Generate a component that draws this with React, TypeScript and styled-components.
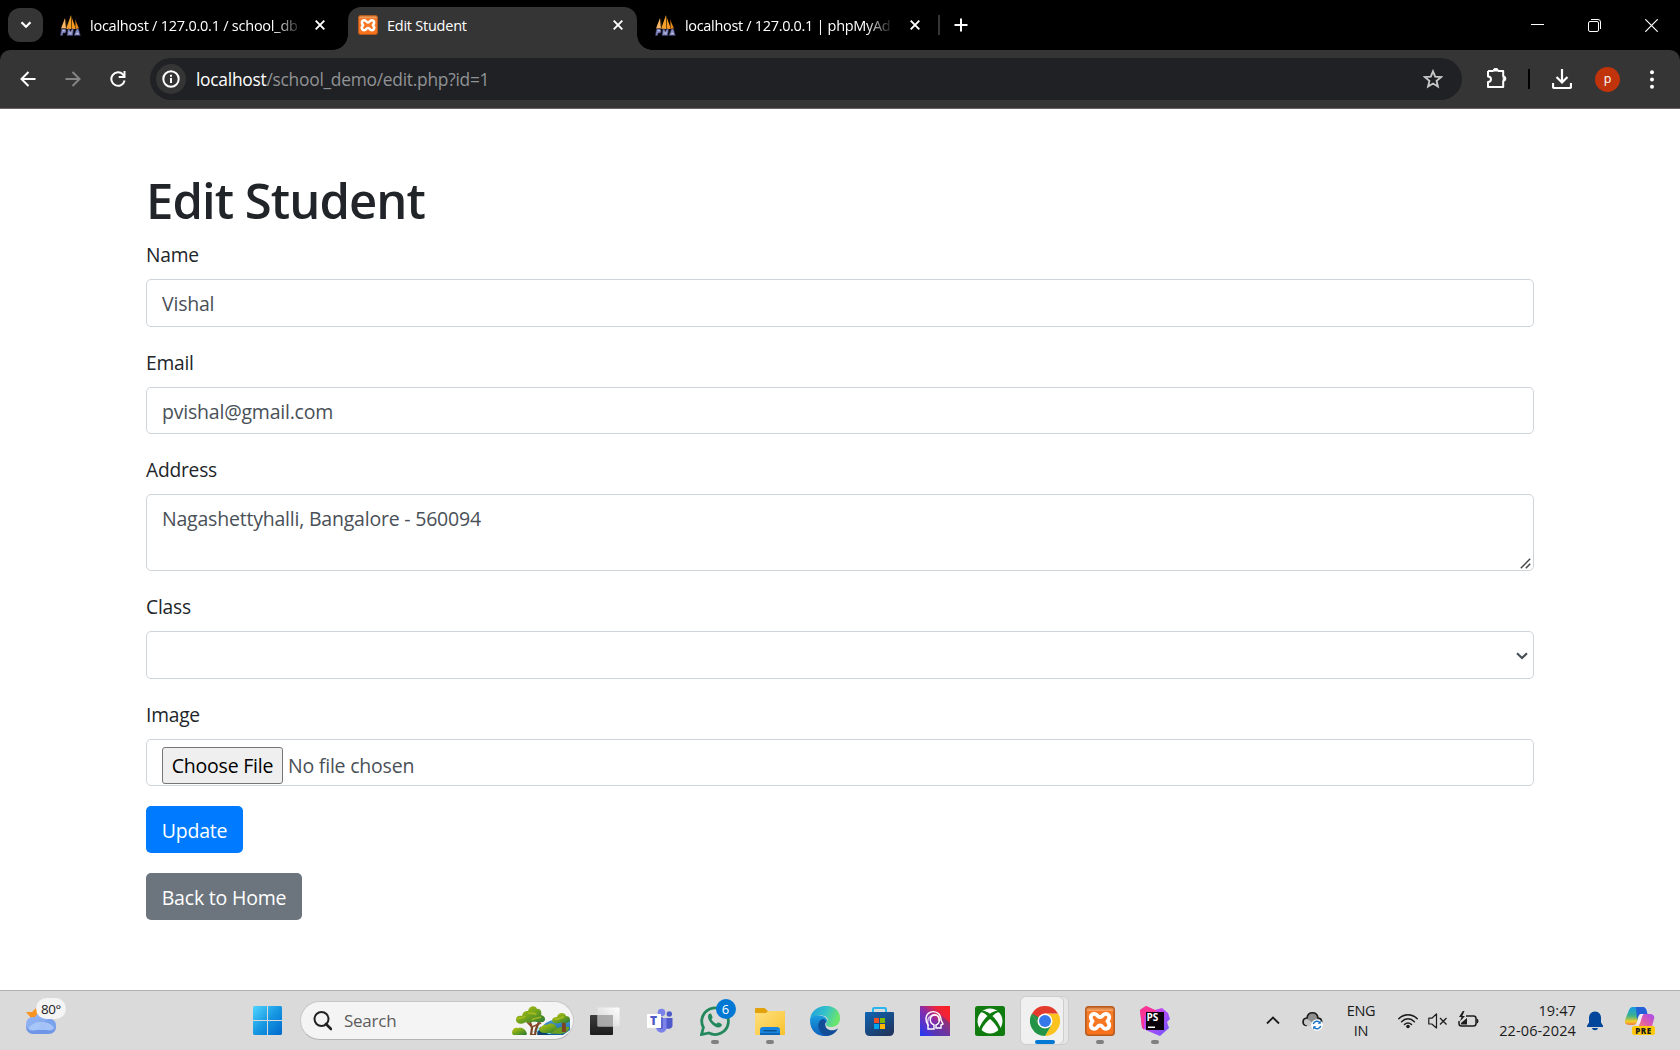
import React from "react";
import styled, { createGlobalStyle } from "styled-components";

const sans = `"Open Sans", "Noto Sans", sans-serif`;

const GlobalStyle = createGlobalStyle`
  *, *::before, *::after { box-sizing: border-box; }
  html, body { margin: 0; padding: 0; background: #fff; overflow: hidden; }
  body { font-family: ${sans}; }
  svg { display: block; flex: none; }
`;

const Screen = styled.div`
  width: 1680px;
  height: 1050px;
  display: flex;
  flex-direction: column;
  background: #fff;
`;

/* ---------- Browser frame ---------- */

const TabStrip = styled.div`
  height: 50px;
  background: #000;
  display: flex;
  align-items: center;
  padding-left: 8px;
`;

const TabSearch = styled.div`
  width: 35px;
  height: 34px;
  border-radius: 12px;
  background: #353535;
  display: grid;
  place-items: center;
`;

const Tab = styled.div<{ $width: number; $active?: boolean; $pad: number }>`
  width: ${(p) => p.$width}px;
  height: 50px;
  padding: 0 ${(p) => p.$pad}px 0 ${(p) => (p.$active ? 10 : 0)}px;
  display: flex;
  align-items: center;
  gap: 9px;
  position: relative;
  ${(p) =>
    p.$active &&
    `
    height: 43px;
    margin-top: 7px;
    padding-bottom: 7px;
    background: #353535;
    border-radius: 13px 13px 0 0;
    &::before, &::after {
      content: "";
      position: absolute;
      bottom: 0;
      width: 15px;
      height: 15px;
    }
    &::before { left: -15px; background: radial-gradient(circle at 0 0, transparent 14.5px, #353535 15px); }
    &::after { right: -15px; background: radial-gradient(circle at 100% 0, transparent 14.5px, #353535 15px); }
  `}
`;

const TabTitle = styled.span<{ $width: number; $after?: number; $tight?: boolean; $fade?: boolean }>`
  width: ${(p) => p.$width}px;
  margin-right: ${(p) => p.$after ?? 0}px;
  overflow: hidden;
  white-space: nowrap;
  color: #fff;
  font-size: 14.5px;
  line-height: 22px;
  padding-top: 1px;
  letter-spacing: ${(p) => (p.$tight ? -0.32 : -0.24)}px;
  ${(p) => p.$fade && "mask-image: linear-gradient(to right, #000 88%, rgba(0, 0, 0, 0.1) 100%);"}
`;

const Spacer = styled.div`
  flex: 1;
`;

const StripDivider = styled.div`
  width: 2px;
  height: 20px;
  margin: 0 14px 0 18px;
  background: #353535;
`;

const WindowControls = styled.div`
  display: flex;
  align-items: center;
  gap: 44px;
  padding-right: 22px;
`;

const ToolbarBack = styled.div`
  background: #000;
`;

const Toolbar = styled.div`
  height: 59px;
  background: #353535;
  border-bottom: 1px solid #6c6262;
  border-radius: 10px 10px 0 0;
  display: flex;
  align-items: center;
  padding: 0 20px 0 20px;
`;

const NavIcons = styled.div`
  display: flex;
  gap: 29px;
  width: 130px;
`;

const AddressBar = styled.div`
  width: 1312px;
  height: 42px;
  border-radius: 21px;
  background: #202124;
  display: flex;
  align-items: center;
  padding: 0 19px 0 6px;
`;

const InfoChip = styled.div`
  width: 30px;
  height: 30px;
  border-radius: 50%;
  background: #353535;
  display: grid;
  place-items: center;
  margin-right: 10px;
`;

const Url = styled.div`
  color: #909396;
  font-size: 17.4px;
  line-height: 26px;
  letter-spacing: -0.27px;
  flex: 1;
`;

const UrlHost = styled.span`
  color: #fff;
`;

const ToolbarActions = styled.div`
  flex: 1;
  display: flex;
  align-items: center;
`;

const ActionDivider = styled.div`
  width: 2px;
  height: 20px;
  background: #000;
  margin: 0 22px 0 20px;
`;

const Avatar = styled.div`
  width: 25px;
  height: 25px;
  border-radius: 50%;
  background: #c0330b;
  color: #fff;
  font-size: 12.5px;
  line-height: 23px;
  text-align: center;
  margin: 0 30px 0 23px;
`;

/* ---------- Page ---------- */

const Page = styled.main`
  flex: 1;
  padding: 61px 146px 0;
  color: #212529;
  font-size: 19.5px;
  line-height: 30px;
  letter-spacing: -0.21px;
`;

const Heading = styled.h1`
  margin: 0 0 10px;
  font-size: 49px;
  line-height: 60px;
  font-weight: 600;
  letter-spacing: -0.95px;
`;

const Group = styled.div<{ $height: number }>`
  height: ${(p) => p.$height}px;
`;

const Label = styled.label`
  display: block;
  height: 39px;
  font-size: 19.2px;
`;

const Control = styled.div<{ $height?: number }>`
  height: ${(p) => p.$height ?? 48}px;
  border: 1px solid #ced4da;
  border-radius: 5px;
  background: #fff;
  color: #495057;
  padding: 9px 15px 0;
  position: relative;
`;

const Grip = styled.svg`
  position: absolute;
  right: 2px;
  bottom: 1px;
`;

const SelectControl = styled(Control)`
  display: flex;
  align-items: center;
  justify-content: flex-end;
  padding: 2px 5px 0;
`;

const FileControl = styled(Control)`
  display: flex;
  gap: 5px;
  padding: 7px 15px 0;
  line-height: 37px;
`;

const FileButton = styled.span`
  width: 121px;
  height: 37px;
  border: 1px solid #767676;
  border-radius: 3px;
  background: #efefef;
  color: #000;
  text-align: center;
  line-height: 35px;
`;

const Button = styled.button<{ $width: number; $tone: string }>`
  display: block;
  width: ${(p) => p.$width}px;
  height: 47px;
  margin: 0 0 20px;
  padding: 3px 0 0;
  border: 0;
  border-radius: 5px;
  background: ${(p) => p.$tone};
  color: #fff;
  font: 19.5px/30px ${sans};
  letter-spacing: -0.2px;
`;

/* ---------- Taskbar ---------- */

const Taskbar = styled.footer`
  height: 60px;
  border-top: 1px solid #b0b0b0;
  background: #dadada;
  display: flex;
  align-items: center;
  color: #1b1b1b;
`;

const Weather = styled.div`
  width: 240px;
  height: 59px;
  padding: 15px 0 0 25px;
  position: relative;
`;

const WeatherBadge = styled.span`
  position: absolute;
  left: 36px;
  top: 7px;
  width: 30px;
  height: 21px;
  border-radius: 10.5px;
  background: #f4f4f4;
  font-size: 13.4px;
  line-height: 22px;
  letter-spacing: -0.4px;
  text-align: center;
`;

const Slot = styled.div`
  width: 55px;
  height: 59px;
  display: grid;
  place-items: center;
  position: relative;
`;

const ActiveSlot = styled(Slot)`
  &::before, &::after {
    content: "";
    position: absolute;
    top: 5px;
    height: 49px;
    border-radius: 6px;
    border: 1px solid #cdcdcd;
    background: #e6e6e6;
  }
  &::before { left: 12px; width: 40px; }
  &::after { left: 3px; width: 44px; background: #f0f0f0; }
  > * { z-index: 1; }
`;

const Indicator = styled.span<{ $active?: boolean }>`
  position: absolute;
  bottom: 6px;
  left: ${(p) => (p.$active ? 18 : 24)}px;
  width: ${(p) => (p.$active ? 20 : 8)}px;
  height: 4px;
  border-radius: 2px;
  background: ${(p) => (p.$active ? "#0078d4" : "#808080")};
`;

const Badge = styled.span`
  position: absolute;
  left: 28.5px;
  top: 8px;
  width: 20px;
  height: 20px;
  border-radius: 50%;
  background: #0078d4;
  color: #fff;
  font-size: 13px;
  line-height: 20px;
  text-align: center;
`;

const SearchBox = styled.div`
  width: 274px;
  height: 39px;
  margin: 0 3px 0 5px;
  border-radius: 20px;
  border: 1px solid #c8c8c8;
  border-bottom-color: #b4b4b4;
  background: #f4f4f4;
  display: flex;
  align-items: center;
  padding: 0 2px 0 12px;
`;

const SearchText = styled.span`
  flex: 1;
  padding-left: 12px;
  color: #5c5c5c;
  font-size: 17px;
  letter-spacing: -0.25px;
  line-height: 28px;
`;

const Tray = styled.div`
  display: flex;
  align-items: center;
  padding-right: 25px;
`;

const TrayText = styled.div<{ $width: number; $align: string; $tracking?: number }>`
  width: ${(p) => p.$width}px;
  text-align: ${(p) => p.$align};
  font-size: 14.5px;
  line-height: 20px;
  letter-spacing: ${(p) => p.$tracking ?? -0.3}px;
  white-space: nowrap;
`;

const Gap = styled.div<{ $w: number }>`
  width: ${(p) => p.$w}px;
`;

const Preview = styled.div`
  position: relative;
  width: 30px;
  height: 30px;
`;

const PreviewTag = styled.span`
  position: absolute;
  left: 7px;
  top: 20px;
  width: 23px;
  height: 9px;
  border-radius: 2px;
  background: #ffc90e;
  color: #1b1b1b;
  font-size: 8px;
  font-weight: 800;
  letter-spacing: 0.5px;
  line-height: 9px;
  text-align: center;
`;

const IconBox = styled.div`
  position: relative;
  width: 30px;
  height: 30px;
`;

const StormText = styled.span`
  position: absolute;
  left: 7px;
  top: 6px;
  color: #fff;
  font-size: 10px;
  font-weight: 700;
  line-height: 11px;
`;

/* ---------- Icons ---------- */

const PmaIcon = () => (
  <svg width="21" height="21" viewBox="0 0 21 21">
    <path d="M5 3 1 13.500h5z" fill="#f9b766" />
    <path d="M11 0 6 14h5.500z" fill="#f6a02c" />
    <path d="M11.700 2 13 6l3 8h-4.300z" fill="#fb9820" />
    <path d="m15 4.500 4 9-3.500.5z" fill="#e98a18" />
    <path d="M11.500 1v13M5.800 4l.9 10M15.500 5v9" stroke="#5c3a12" strokeWidth=".6" />
    <path d="M.5 20.500 1.500 14H5q1.500.5 1 2.500l-.5 1.500H3l-.4 2.500zM7 20.500 8 14h1.500l.8 2.500L12 14h1.500l-.8 6.500zM14 20.500l2.500-6.500h2l1.800 6.500z" fill="#8c90c4" stroke="#30335c" strokeWidth=".7" />
    <path d="M3 15.500h1.500M9.200 17.500l1 1 1.200-1M16.500 18.500h2" stroke="#dcdff2" strokeWidth=".8" fill="none" />
  </svg>
);

const XamppIcon = ({ size }: { size: number }) => (
  <svg width={size} height={size} viewBox="0 0 30 30">
    <defs>
      <linearGradient id="xg" x1="0" y1="0" x2="0" y2="1">
        <stop offset="0" stopColor="#c9753c" />
        <stop offset=".14" stopColor="#ffa461" />
        <stop offset=".15" stopColor="#f47b28" />
        <stop offset="1" stopColor="#f9711b" />
      </linearGradient>
    </defs>
    <rect x=".8" y=".8" width="28.400" height="28.400" rx="3" fill="url(#xg)" stroke="#b85a1c" strokeWidth="1.500" />
    <path
      d="M9.500 7.800C5.800 7.800 4.300 11.500 7.600 15.200 4.300 18.800 5.800 22.800 9.500 22.800c3.300 0 2.500-3.400 5.500-3.400s2.200 3.400 5.500 3.400c3.700 0 5.200-4 1.900-7.600C25.700 11.500 24.200 7.800 20.500 7.800c-3.300 0-2.500 3.400-5.500 3.400S12.800 7.800 9.500 7.800z"
      fill="none"
      stroke="#fff"
      strokeWidth="3.800"
      strokeLinejoin="round"
    />
  </svg>
);

const CloseIcon = () => (
  <svg width="10" height="10" viewBox="0 0 10 10">
    <path d="m.7.7 8.600 8.600M9.300.7.7 9.300" stroke="#fff" strokeWidth="1.900" />
  </svg>
);

const BackIcon = () => (
  <svg width="16" height="16" viewBox="0 0 16 16">
    <path d="M15.500 8H2M8.500 1 1.500 8l7 7" fill="none" stroke="#fff" strokeWidth="2" />
  </svg>
);

const ForwardIcon = () => (
  <svg width="16" height="16" viewBox="0 0 16 16">
    <path d="M.5 8H14M7.500 1l7 7-7 7" fill="none" stroke="#858585" strokeWidth="2" />
  </svg>
);

const ReloadIcon = () => (
  <svg width="16" height="16" viewBox="0 0 16 16">
    <path d="M14.600 9.500A6.700 6.700 0 1 1 13 3.500l1.300 1.600" fill="none" stroke="#fff" strokeWidth="2" />
    <path d="M15.500 0v7H8.700V5h4.800V0z" fill="#fff" />
  </svg>
);

const InfoIcon = () => (
  <svg width="18" height="18" viewBox="0 0 18 18">
    <circle cx="9" cy="9" r="7.700" fill="none" stroke="#fff" strokeWidth="2" />
    <path d="M9 8v5M9 4.700v2" stroke="#fff" strokeWidth="2" />
  </svg>
);

const StarIcon = () => (
  <svg width="20" height="20" viewBox="0 0 20 20">
    <path d="m10 2.300 2.200 5.300 5.800.5-4.400 3.800 1.300 5.600-4.900-3-4.900 3 1.300-5.600L2 8.100l5.800-.5z" fill="none" stroke="#c7c7c7" strokeWidth="1.900" />
  </svg>
);

const PuzzleIcon = () => (
  <svg width="22" height="22" viewBox="0 0 22 22">
    <path d="M2 3h5.500M12 3h5.200v5.700M17.200 12.500V19H2v-5c4-.2 4-5.400 0-5.600V3" fill="none" stroke="#fff" strokeWidth="2" strokeLinejoin="round" />
    <path d="M7 3a2.700 2.700 0 0 1 5.400 0zM17.200 7.900a2.700 2.700 0 0 1 0 5.400z" fill="#fff" stroke="#fff" />
  </svg>
);

const DownloadIcon = () => (
  <svg width="20" height="20" viewBox="0 0 20 20">
    <path d="M10 0v13M4.500 8l5.500 5.500L15.500 8M1 14v3.500q0 1.500 1.500 1.500h15q1.500 0 1.500-1.500V14" fill="none" stroke="#fff" strokeWidth="2.200" />
  </svg>
);

const KebabIcon = () => (
  <svg width="4" height="19" viewBox="0 0 4 19">
    <circle cx="2" cy="2.200" r="2" fill="#fff" />
    <circle cx="2" cy="9.500" r="2" fill="#fff" />
    <circle cx="2" cy="16.800" r="2" fill="#fff" />
  </svg>
);

const CloudSunIcon = () => (
  <svg width="32" height="30" viewBox="0 0 32 30">
    <defs>
      <linearGradient id="cl" x1="0" y1="0" x2="0" y2="1">
        <stop offset="0" stopColor="#9dbdf6" />
        <stop offset="1" stopColor="#6f98e8" />
      </linearGradient>
    </defs>
    <path d="M1 6h6l6-6v13l-7-1z" fill="#f79422" />
    <rect x="1" y="14" width="30" height="14" rx="7" fill="#6f96e6" />
    <circle cx="18" cy="15" r="9" fill="url(#cl)" />
    <circle cx="8" cy="18" r="7" fill="#8db0f2" />
    <circle cx="25" cy="19" r="6" fill="#7ba2ed" />
    <path d="M4 22c4-8 21-8 25 0-2 3-5 2-8 2H9c-3 0-5 0-5-2z" fill="#b3cdfb" opacity=".75" />
  </svg>
);

const WindowsIcon = () => (
  <svg width="29" height="29" viewBox="0 0 29 29">
    <defs>
      <linearGradient id="wn" x1="0" y1="0" x2="1" y2="1">
        <stop offset="0" stopColor="#4fd5ff" />
        <stop offset=".5" stopColor="#1797e2" />
        <stop offset="1" stopColor="#0069cc" />
      </linearGradient>
    </defs>
    <path d="M1 0h13v14H0V1zM15 0h13l1 1v13H15zM0 15h14v14H1l-1-1zM15 15h14v13l-1 1H15z" fill="url(#wn)" />
  </svg>
);

const SearchIcon = () => (
  <svg width="19" height="20" viewBox="0 0 19 20">
    <circle cx="8.500" cy="8" r="7" fill="none" stroke="#222" strokeWidth="2" />
    <path d="m13 13 5 5" stroke="#222" strokeWidth="2.600" strokeLinecap="round" />
  </svg>
);

const LandscapeIcon = () => (
  <svg width="59" height="29" viewBox="0 0 59 29">
    <defs>
      <linearGradient id="lf" x1="0" y1="0" x2="1" y2="1">
        <stop offset="0" stopColor="#c0c713" />
        <stop offset=".5" stopColor="#72a31c" />
        <stop offset="1" stopColor="#217537" />
      </linearGradient>
      <linearGradient id="lk" x1="0" y1="0" x2="0" y2="1">
        <stop offset="0" stopColor="#4596d4" />
        <stop offset="1" stopColor="#105d9d" />
      </linearGradient>
    </defs>
    <path d="M25 29c4-8 8-14 17-15h16v10l-7 5z" fill="url(#lk)" />
    <path d="M22 26c5-3 10 2 17 1M24 23c4-2 7 1 12 1" stroke="#74d5ef" strokeWidth="1.800" fill="none" />
    <path d="M26 29c-3-4 4-5 2-9 4 5 4 6 10 9z" fill="#0e426d" />
    <path d="M0 27c0-4 3-6 6-5 5-1 8 2 9 6l-1 1H1z" fill="url(#lf)" />
    <path d="M27 22c3 0 3-4 8-3 4-3 9-1 10 3l3 1-3 4H33c-3 0-6-1-6-5z" fill="url(#lf)" />
    <path d="M42 25c3-4 8-5 15-4 1 3-3 6-8 7l-11-.5z" fill="#6a9f23" />
    <path d="M51 16v9h2l-.5-9M18 16l2 6-1 7h4l1-6 3-7" fill="none" stroke="#7b4524" strokeWidth="2.200" />
    <path d="m15 16 5 5 9-4" fill="none" stroke="#8a4a28" strokeWidth="1.600" />
    <path d="M4 14c0-4 3-5 6-4 1-5 4-5 6-5 1-6 8-6 9-2 4-1 5 4 4 6 5 1 5 6 2 7-4 1-8-1-11 0-4 2-6-1-8 1-3 2-8 0-8-3z" fill="url(#lf)" />
    <path d="M40 14c1-3 4-3 5-3 1-5 8-5 9-1 4 0 5 4 3 6-4 2-6 0-9 1-4 1-8 0-8-3z" fill="url(#lf)" />
    <path d="M5 13c4-2 7 0 8-3M16 7c4 1 7-1 8 2M20 14c3-3 6-1 9-3M43 13c4 1 6-2 9-2" stroke="#b7c321" strokeWidth="1.800" fill="none" opacity=".7" />
  </svg>
);

const TaskViewIcon = () => (
  <svg width="30" height="30" viewBox="0 0 30 30">
    <defs>
      <linearGradient id="tv" x1="0" y1="0" x2="0" y2="1">
        <stop offset="0" stopColor="#3c3c3c" />
        <stop offset="1" stopColor="#1c1c1c" />
      </linearGradient>
      <linearGradient id="tw" x1="1" y1="0" x2="0" y2="1">
        <stop offset="0" stopColor="#fff" />
        <stop offset="1" stopColor="#d0d0d0" />
      </linearGradient>
    </defs>
    <rect x="0" y="9" width="23" height="20" rx="1" fill="url(#tv)" />
    <rect x="7.500" y="1.500" width="22" height="19" rx="1" fill="url(#tw)" />
    <path d="M7.500 9H23v11.500H7.500z" fill="#989898" opacity=".75" />
  </svg>
);

const TeamsLetter = styled.span`
  position: absolute;
  left: 2px;
  top: 8px;
  width: 14px;
  color: #5059c9;
  font-size: 12px;
  font-weight: 800;
  line-height: 14px;
  text-align: center;
`;

const TeamsIcon = () => (
  <IconBox>
    <svg width="30" height="30" viewBox="0 0 30 30">
      <circle cx="16.500" cy="6.500" r="3.800" fill="#7b83eb" />
      <circle cx="24.300" cy="8" r="2.700" fill="#5059c9" />
      <path d="M18 12h9.500v7.500c0 4-7 4.500-9.500 1z" fill="#5059c9" />
      <path d="M11 12h10.500v9c0 8-10.500 7-10.500 0z" fill="#7b83eb" />
      <path d="M14 11h4v12h-5z" fill="#4b53bc" opacity=".6" />
      <path d="M2 8h14v14H2z" fill="#fff" />
    </svg>
    <TeamsLetter>T</TeamsLetter>
  </IconBox>
);

const WhatsAppIcon = () => (
  <svg width="30" height="30" viewBox="0 0 30 30">
    <path d="M1.500 28.500 3.400 21.500A13.300 13.300 0 1 1 9 27z" fill="none" stroke="#23895c" strokeWidth="2.800" />
    <path d="M10 7.500c-3 1.500-2.500 5 .5 9 4 4.500 8 6.500 10.500 4 1.500-1.500 1-2.500-1-3.500-1.800-1-2.300-.8-3.500.8-2-.6-4.300-2.800-5-4.800 1.500-1.200 1.200-1.500.4-3.500C11.400 7.800 11 7.200 10 7.500z" fill="#23895c" />
  </svg>
);

const FolderIcon = () => (
  <svg width="30" height="30" viewBox="0 0 30 30">
    <defs>
      <linearGradient id="fd" x1="0" y1="0" x2="1" y2="1">
        <stop offset="0" stopColor="#ffe080" />
        <stop offset="1" stopColor="#f9c22d" />
      </linearGradient>
    </defs>
    <path d="M0 3q0-1 1-1h8.500L13 5h16q1 0 1 1v3H0z" fill="#e2a20b" />
    <path d="M0 7h11l2-2h16q1 0 1 1v22q0 1-1 1H1q-1 0-1-1z" fill="url(#fd)" />
    <path d="M5 29v-5q0-3 3-3h14q3 0 3 3v5z" fill="#1683dc" />
    <path d="M5 28h20" stroke="#0d63b5" strokeWidth="2" />
    <path d="M8.500 24.700h13" stroke="#0c4f91" strokeWidth="1.400" />
  </svg>
);

const EdgeIcon = () => (
  <svg width="30" height="30" viewBox="0 0 30 30">
    <defs>
      <linearGradient id="ea" x1="0" y1="0" x2="1" y2=".3">
        <stop offset="0" stopColor="#1a9fdc" />
        <stop offset=".55" stopColor="#35c1cb" />
        <stop offset="1" stopColor="#6ae56b" />
      </linearGradient>
      <linearGradient id="eb" x1="0" y1="0" x2="0" y2="1">
        <stop offset="0" stopColor="#1ba0e0" />
        <stop offset="1" stopColor="#0d5fbc" />
      </linearGradient>
    </defs>
    <path d="M0 15C0-4 30-5 30 12c0 7-5 9-9 9-5 0-6-2-4-5 1-2 1-5-3-6C8 8 3 11 0 15z" fill="url(#ea)" />
    <path d="M0 14c2-4 7-6 12-4 5 1 6 5 4 7-2-2-5 0-5 3 0 6 7 10 13 7-7 6-24 4-24-13z" fill="url(#eb)" />
    <path d="M12.500 13c-6 2-6 12 2 16.500 6 1 11-2 13.500-7-9 5-15-1-12-7.500-1-1.500-2-2-3.500-2z" fill="#124d98" />
  </svg>
);

const StoreIcon = () => (
  <svg width="30" height="30" viewBox="0 0 30 30">
    <defs>
      <linearGradient id="st" x1="0" y1="0" x2=".7" y2="1">
        <stop offset="0" stopColor="#0f65b4" />
        <stop offset="1" stopColor="#1f3660" />
      </linearGradient>
    </defs>
    <path d="M8 7V3.200Q8 2 9.200 2h10.600Q21 2 21 3.200V7" fill="none" stroke="#28b6ef" strokeWidth="2" />
    <path d="M1 6h27q1 0 1 1v18q0 5-5 5H5q-5 0-5-5V7q0-1 1-1z" fill="url(#st)" />
    <path d="M9 12h5v5H9z" fill="#f25022" />
    <path d="M15 12h5v5h-5z" fill="#7fba00" />
    <path d="M9 18h5v5H9z" fill="#00a4ef" />
    <path d="M15 18h5v5h-5z" fill="#ffb900" />
  </svg>
);

const HeadIcon = () => (
  <svg width="30" height="30" viewBox="0 0 30 30">
    <defs>
      <linearGradient id="hd" x1="0" y1="1" x2="1" y2="0">
        <stop offset="0" stopColor="#1c3cf5" />
        <stop offset=".5" stopColor="#8c2ba5" />
        <stop offset=".75" stopColor="#f02338" />
        <stop offset="1" stopColor="#ff2020" />
      </linearGradient>
    </defs>
    <path d="M0 0h30v30H0z" fill="url(#hd)" />
    <path d="m9 24 13-14 8 7v13H15z" fill="#523b9a" opacity=".5" />
    <g fill="none" stroke="#fff" strokeWidth="1.400">
      <path d="M8 23h6v-4c-6-3-4-10 1-10s6 8 1 10v3h5v-3l2-1-2-4C21 3 6 3 6 13c0 3 1 4 2 6z" />
      <path d="M8.500 20C4 8 20 4 18.800 15" opacity=".7" />
    </g>
  </svg>
);

const XboxIcon = () => (
  <svg width="30" height="30" viewBox="0 0 30 30">
    <rect width="30" height="30" rx="2.500" fill="#107c10" />
    <circle cx="15" cy="15" r="12.500" fill="#fff" />
    <path d="M6 5c3-1 6 .5 9 2.800C18 5.500 21 4 24 5l1.500 1.500c-2.500-1-5 .3-8 3.500 5 5 8 10 8.500 14l-2 2c-1-5-5-9.500-9-13-4 3.500-8 8-9 13l-2-2c.5-4 3.500-9 8.500-14-3-3.200-5.500-4.500-8-3.500z" fill="#107c10" />
  </svg>
);

const ChromeIcon = () => (
  <svg width="30" height="30" viewBox="0 0 30 30">
    <path d="M15 7.500h13A15 15 0 0 1 15 30l6.500-11.200z" fill="#fcc31f" />
    <path d="M8.500 18.800h13L15 30A15 15 0 0 1 2 7.500z" fill="#229447" />
    <path d="M2 7.500A15 15 0 0 1 28 7.500H15l-6.500 11z" fill="#e33b2e" />
    <path d="M2 7.500 8.500 18.800 15 15z" fill="#229447" />
    <circle cx="15" cy="15" r="7.500" fill="#fff" />
    <circle cx="15" cy="15" r="6" fill="#3478ea" />
  </svg>
);

const StormIcon = () => (
  <IconBox>
    <svg width="30" height="30" viewBox="0 0 30 30">
      <defs>
        <linearGradient id="ps" x1="0" y1="0" x2="1" y2="1">
          <stop offset="0" stopColor="#ff318c" />
          <stop offset=".45" stopColor="#b74af7" />
          <stop offset="1" stopColor="#6b57ff" />
        </linearGradient>
      </defs>
      <path d="m0 4 6-4 9 4 7-2 6 5 2 6-3 3 2 6-9 8-12-5-6-3z" fill="url(#ps)" />
      <path d="m0 4 6-4 11 5-13 5v14l-2-3z" fill="#fb3595" />
      <path d="M6 6h18v18H6z" fill="#090009" />
      <path d="M8 20.500h7V22H8z" fill="#fff" />
    </svg>
    <StormText>PS</StormText>
  </IconBox>
);

const OneDriveIcon = () => (
  <svg width="21" height="20" viewBox="0 0 21 20">
    <path d="M5 14.500c-5 0-5.500-7 0-7.500 1-7 10-7 11 0 4 0 4 4 3 6" fill="#8e8e8e" stroke="#1c1c1c" strokeWidth="1.700" />
    <path d="m5 8 10 6.500H5c-4-1-4-6 0-6.500z" fill="#c7c7c7" />
    <circle cx="15" cy="14" r="5.800" fill="#fff" />
    <path d="M11.300 13.200a3.800 3.800 0 0 1 6.700-1.500M18.700 14.800a3.800 3.800 0 0 1-6.700 1.500" fill="none" stroke="#1673c8" strokeWidth="1.500" />
    <path d="M18.800 9.500v3.200h-3.200zM11.200 18.500v-3.200h3.200z" fill="#1673c8" />
  </svg>
);

const WifiIcon = () => (
  <svg width="20" height="16" viewBox="0 0 20 16">
    <path d="M.8 5.800c5-5.400 13.400-5.400 18.400 0M3.600 8.700c3.700-3.800 9.100-3.800 12.800 0M6.500 11.500c2-2 5-2 7 0" fill="none" stroke="#1c1c1c" strokeWidth="1.500" strokeLinecap="round" />
    <circle cx="10" cy="13.500" r="1.800" fill="#1c1c1c" />
  </svg>
);

const MuteIcon = () => (
  <svg width="20" height="16" viewBox="0 0 20 16">
    <path d="M.8 5.200h3L8.500 1v14l-4.700-4h-3z" fill="none" stroke="#1c1c1c" strokeWidth="1.200" strokeLinejoin="round" />
    <path d="m12 5 6.500 6.500M18.500 5 12 11.500" stroke="#1c1c1c" strokeWidth="1.300" />
  </svg>
);

const BatteryIcon = () => (
  <svg width="21" height="20" viewBox="0 0 21 20">
    <path d="M8 5h7.500q2.500 0 2.500 2.500v5q0 2.500-2.500 2.500H3.500Q1 15 1 12.500V10" fill="none" stroke="#1c1c1c" strokeWidth="1.500" />
    <path d="M18.500 7.500q2 0 2 2.500t-2 2.500z" fill="#1c1c1c" />
    <path d="M3 13.500V12l6-5v6.500z" fill="#1c1c1c" />
    <path d="M4.800 0 1 6h2.500L2 10.500 7 5H4.300L6.500 0z" fill="#1c1c1c" />
  </svg>
);

const BellIcon = () => (
  <svg width="16" height="20" viewBox="0 0 16 20">
    <path d="M8 .5c4 0 6 3 6 6.500v4.500l2 3.200V16H0v-1.300l2-3.200V7C2 3.500 4 .5 8 .5zM5 17h6c-.5 3-5.500 3-6 0z" fill="#02469b" />
  </svg>
);

const CopilotIcon = () => (
  <Preview>
    <svg width="30" height="30" viewBox="0 0 30 30">
      <defs>
        <linearGradient id="ca" x1="0" y1="0" x2="0" y2="1">
          <stop offset="0" stopColor="#159ae6" />
          <stop offset=".5" stopColor="#3fb38b" />
          <stop offset=".8" stopColor="#f0cd29" />
          <stop offset="1" stopColor="#f57a42" />
        </linearGradient>
        <linearGradient id="cb" x1="1" y1="0" x2="0" y2="1">
          <stop offset="0" stopColor="#a54bf0" />
          <stop offset=".5" stopColor="#df5ca9" />
          <stop offset="1" stopColor="#ff9a5a" />
        </linearGradient>
      </defs>
      <path d="M8 1h10c-3 2-4 7-5 12-1 4-2 6-6 6H4c-3 0-5-2-4-5L4 4c.8-2 2-3 4-3z" fill="url(#ca)" />
      <path d="M11 1h7c2.500 0 3.500 2 4.500 7H16c-2 0-3 3-4 6z" fill="#2360d8" />
      <path d="M19 8h6c3 0 5 2 4 5l-3 11H10c4-1 5-7 6-12 .5-2 1-4 3-4z" fill="url(#cb)" />
      <path d="M16 8h3c-2 1-2.500 5-3.500 8-.8 2-1.800 3-4.500 3 2-3 2-11 5-11z" fill="#f3eaf3" />
    </svg>
    <PreviewTag>PRE</PreviewTag>
  </Preview>
);

/* ---------- Composition ---------- */

const Browser = () => (
  <header>
    <TabStrip>
      <TabSearch>
        <svg width="12" height="8" viewBox="0 0 12 8">
          <path d="m1.500 1.300 4.500 4.500 4.500-4.500" fill="none" stroke="#fff" strokeWidth="2.200" />
        </svg>
      </TabSearch>
      <Gap $w={17} />
      <Tab $width={288} $pad={0}>
        <PmaIcon />
        <TabTitle $width={210} $after={6} $fade>
          localhost / 127.0.0.1 / school_db
        </TabTitle>
        <CloseIcon />
      </Tab>
      <Tab $width={289} $pad={14} $active>
        <XamppIcon size={20} />
        <TabTitle $width={217}>Edit Student</TabTitle>
        <CloseIcon />
      </Tab>
      <Gap $w={18} />
      <Tab $width={265} $pad={0}>
        <PmaIcon />
        <TabTitle $width={210} $after={10.5} $tight $fade>
          localhost / 127.0.0.1 | phpMyAd
        </TabTitle>
        <CloseIcon />
      </Tab>
      <StripDivider />
      <svg width="14" height="14" viewBox="0 0 14 14">
        <path d="M7 .5v13M.5 7h13" stroke="#fff" strokeWidth="2" />
      </svg>
      <Spacer />
      <WindowControls>
        <svg width="13" height="13" viewBox="0 0 13 13">
          <path d="M0 5.500h13" stroke="#fff" />
        </svg>
        <svg width="13" height="13" viewBox="0 0 13 13">
          <rect x=".5" y="2.500" width="10" height="10" rx="1.500" fill="none" stroke="#fff" />
          <path d="M3 .5h7q2.500 0 2.500 2.500v7" fill="none" stroke="#fff" />
        </svg>
        <svg width="13" height="13" viewBox="0 0 13 13">
          <path d="m.3.3 12.400 12.400M12.700.3.3 12.700" stroke="#fff" strokeWidth="1.200" />
        </svg>
      </WindowControls>
    </TabStrip>
    <ToolbarBack>
      <Toolbar>
        <NavIcons>
          <BackIcon />
          <ForwardIcon />
          <ReloadIcon />
        </NavIcons>
        <AddressBar>
          <InfoChip>
            <InfoIcon />
          </InfoChip>
          <Url>
            <UrlHost>localhost</UrlHost>/school_demo/edit.php?id=1
          </Url>
          <StarIcon />
        </AddressBar>
        <Gap $w={24} />
        <ToolbarActions>
          <PuzzleIcon />
          <ActionDivider />
          <DownloadIcon />
          <Avatar>p</Avatar>
          <KebabIcon />
        </ToolbarActions>
      </Toolbar>
    </ToolbarBack>
  </header>
);

const EditForm = () => (
  <Page>
    <Heading>Edit Student</Heading>
    <Group $height={108}>
      <Label>Name</Label>
      <Control>Vishal</Control>
    </Group>
    <Group $height={107}>
      <Label>Email</Label>
      <Control $height={47}>pvishal@gmail.com</Control>
    </Group>
    <Group $height={137}>
      <Label>Address</Label>
      <Control $height={77}>
        Nagashettyhalli, Bangalore - 560094
        <Grip width="11" height="11" viewBox="0 0 11 11">
          <path d="M.8 10.200 10.200.8M5.800 10.200 10.200 5.800" stroke="#444" strokeWidth="1.500" />
        </Grip>
      </Control>
    </Group>
    <Group $height={108}>
      <Label>Class</Label>
      <SelectControl>
        <svg width="12" height="8" viewBox="0 0 12 8">
          <path d="M1 1.300 6 6l5-4.700" fill="none" stroke="#495057" strokeWidth="2.200" />
        </svg>
      </SelectControl>
    </Group>
    <Group $height={106}>
      <Label>Image</Label>
      <FileControl $height={47}>
        <FileButton>Choose File</FileButton>
        <span>No file chosen</span>
      </FileControl>
    </Group>
    <Button as="button" $width={97} $tone="#007bff">
      Update
    </Button>
    <Button $width={156} $tone="#6c757d">
      Back to Home
    </Button>
  </Page>
);

const WindowsBar = () => (
  <Taskbar>
    <Weather>
      <CloudSunIcon />
      <WeatherBadge>80°</WeatherBadge>
    </Weather>
    <Slot>
      <WindowsIcon />
    </Slot>
    <SearchBox>
      <SearchIcon />
      <SearchText>Search</SearchText>
      <LandscapeIcon />
    </SearchBox>
    <Slot>
      <TaskViewIcon />
    </Slot>
    <Slot>
      <TeamsIcon />
    </Slot>
    <Slot>
      <WhatsAppIcon />
      <Badge>6</Badge>
      <Indicator />
    </Slot>
    <Slot>
      <FolderIcon />
      <Indicator />
    </Slot>
    <Slot>
      <EdgeIcon />
    </Slot>
    <Slot>
      <StoreIcon />
    </Slot>
    <Slot>
      <HeadIcon />
    </Slot>
    <Slot>
      <XboxIcon />
    </Slot>
    <ActiveSlot>
      <ChromeIcon />
      <Indicator $active />
    </ActiveSlot>
    <Slot>
      <XamppIcon size={30} />
      <Indicator />
    </Slot>
    <Slot>
      <StormIcon />
      <Indicator />
    </Slot>
    <Spacer />
    <Tray>
      <svg width="14" height="9" viewBox="0 0 14 9">
        <path d="m1 7.500 6-6 6 6" fill="none" stroke="#1c1c1c" strokeWidth="1.800" />
      </svg>
      <Gap $w={22} />
      <OneDriveIcon />
      <Gap $w={18} />
      <TrayText $width={40} $align="center">
        ENG
        <br />
        IN
      </TrayText>
      <Gap $w={17} />
      <WifiIcon />
      <Gap $w={10} />
      <MuteIcon />
      <Gap $w={10} />
      <BatteryIcon />
      <Gap $w={17} />
      <TrayText $width={80} $align="right" $tracking={0.12}>
        19:47
        <br />
        22-06-2024
      </TrayText>
      <Gap $w={11} />
      <BellIcon />
      <Gap $w={22} />
      <CopilotIcon />
    </Tray>
  </Taskbar>
);

export default function App() {
  return (
    <Screen>
      <GlobalStyle />
      <Browser />
      <EditForm />
      <WindowsBar />
    </Screen>
  );
}
